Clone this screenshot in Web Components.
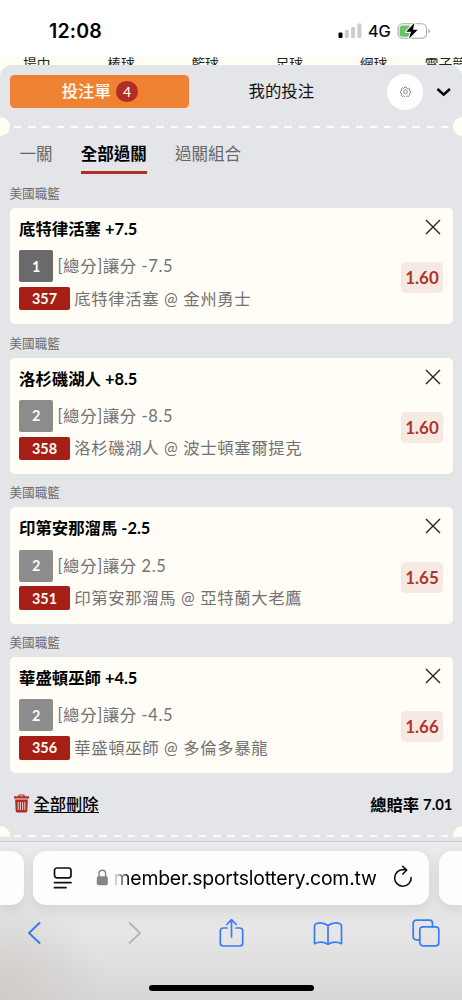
<!DOCTYPE html>
<html lang="zh-Hant">
<head>
<meta charset="utf-8">
<title>投注單</title>
<style>
html,body{margin:0;height:100%}
body{width:462px;height:1000px;overflow:hidden;background:#fff;font-family:Lato,"Noto Sans CJK TC",sans-serif;color:#111}
</style>
</head>
<body>
<phone-screen></phone-screen>
<script>
const define = (name, css, html) => customElements.define(name, class extends HTMLElement {
  connectedCallback() {
    if (this.shadowRoot) return;
    const root = this.attachShadow({mode: 'open'});
    root.innerHTML = `<style>*{box-sizing:border-box}${css}</style>` + (typeof html === 'function' ? html(this) : html);
  }
});

define('status-bar', `
:host{display:flex;box-sizing:border-box;height:56px;background:#fff;padding:5px 31px 0 49px;align-items:center;font-family:Inter,sans-serif;color:#000;flex:none}
.time{font-size:19.5px;font-weight:600;letter-spacing:.2px;width:288.500px;flex:none}
.net{font-size:16.4px;font-weight:400;-webkit-text-stroke:.2px #000;width:33px;margin-left:6.500px;letter-spacing:-.2px;flex:none}
svg{display:block;flex:none}`, `
<span class="time">12:08</span>
<svg width="24" height="16" viewBox="0 0 24 16"><rect x=".5" y="9.5" width="4" height="5.5" rx="1" fill="#000"/><g fill="#ccc"><rect x="6.8" y="7" width="4" height="8" rx="1"/><rect x="13.1" y="4" width="4" height="11" rx="1"/><rect x="19.4" y="0.5" width="4" height="14.5" rx="1"/></g></svg>
<span class="net">4G</span>
<svg width="34" height="18" viewBox="0 0 34 18" style="margin-left:-4px"><rect x="1" y="1.8" width="28.5" height="14.4" rx="4.6" fill="#fff" stroke="#aaa" stroke-width="1.1"/><path d="M31.3 6.8q1.6.7 1.6 2.3t-1.6 2.3z" fill="#aaa"/><path d="M5.5 3.4H13v11.4H5.5Q2.6 14.8 2.6 12V6.2Q2.6 3.4 5.5 3.4z" fill="#65c466"/><path d="M17.4 1 9.2 9.8H14l-2 7 8.7-9H16z" fill="#000" stroke="#fff" stroke-width="2.4" paint-order="stroke" stroke-linejoin="round"/></svg>`);

define('sport-strip', `
:host{display:block;height:9px;background:#fffdf4;overflow:hidden;flex:none}
div{display:flex;padding-left:23px;font-size:13.7px;line-height:20px;white-space:nowrap;color:#222;margin-top:-2px}
span{width:84.2px;flex:none}span:nth-child(5){width:65px}`, `
<div><span>場中</span><span>棒球</span><span>籃球</span><span>足球</span><span>網球</span><span>電子競技</span></div>`);

define('ticket-tear', `
:host{display:flex;height:19px;align-items:center;overflow:hidden;margin:0 -9.5px;flex:none}
i{width:19px;height:19px;border-radius:50%;background:#fffdf4;flex:none}
i:first-of-type{margin-left:-9.5px}i:last-of-type{margin-right:-9.5px}
b{flex:1;height:2px;margin:1.5px 4px 0 4.8px;background:repeating-linear-gradient(90deg,#fffdf4 0 7.4px,transparent 7.4px 14.23px)}`,
`<i></i><b></b><i></i>`);

define('slip-header', `
:host{display:flex;height:33px;align-items:center;flex:none;font-size:16.4px}
.on{width:179.5px;height:33px;border-radius:4.5px;background:#ef8132;color:#fffdf4;display:flex;align-items:center;justify-content:center;font-weight:500}
.on span{padding:0 0 3px 1px}
.n{width:21.5px;height:21.5px;border-radius:50%;background:#b22d23;margin-left:5.5px;font-size:14px;display:flex;align-items:center;justify-content:center}
.off{width:198px;padding:0 0 3px 59.5px}
.gear{width:36px;height:36px;border-radius:50%;background:#fff;display:flex;align-items:center;justify-content:center;flex:none}
.chev{margin-left:13px}`, `
<div class="on"><span>投注單</span><div class="n">4</div></div><div class="off">我的投注</div>
<div class="gear"><svg width="11" height="11" viewBox="0 0 22 22" fill="none" stroke="#666" stroke-width="1.5"><path d="M9.5 2h3l.7 2.2 2.1.9 2-1 2.1 2.1-1 2 .9 2.1 2.2.7v3l-2.2.7-.9 2.1 1 2-2.1 2.1-2-1-2.1.9-.7 2.2h-3l-.7-2.2-2.1-.9-2 1-2.1-2.1 1-2-.9-2.1L.5 13.5v-3l2.200-.7.9-2.100-1-2 2.100-2.100 2 1 2.100-.9z"/><circle cx="11" cy="11.5" r="3.8"/></svg></div>
<svg class="chev" width="16" height="10" viewBox="0 0 16 10" fill="none" stroke="#000" stroke-width="2.6"><path d="M1.500 2l6.200 5.600L13.900 2"/></svg>`);

define('mode-tabs', `
:host{display:flex;height:39px;padding:0 0 0 10px;font-size:16.5px;line-height:39px;color:#666;flex:none}
span{height:39px;flex:none;margin-right:28.3px}
.on{font-weight:700;color:#000;border-bottom:3.5px solid #b22d23}`,
`<span>一關</span><span class="on">全部過關</span><span>過關組合</span>`);

define('bet-card', `
:host{display:block;height:149.7px;flex:none}
.lg{font-size:12.6px;line-height:18px;color:#6c6c6e;height:23px}
.card{height:116.4px;background:#fffdf6;border-radius:5px;display:flex;justify-content:space-between;padding:10px 9.5px 0 9.5px}
.t{font-size:16.4px;font-weight:700;line-height:22px;height:32.3px;color:#000;white-space:nowrap}
.r{display:flex;align-items:center;color:#727272;font-size:16.4px;letter-spacing:.62px;white-space:nowrap}
.r span{padding-bottom:2px}
.r b{color:#fffdf6;font-size:14.4px;letter-spacing:0;display:flex;align-items:center;justify-content:center;border-radius:2px;margin-right:4.2px}
.a{height:32px;margin-bottom:4.6px}.a b{width:34.3px;height:32px;background:var(--pick,#8c8c8c)}
.c{height:23.6px}.c b{width:51px;height:23.6px;background:#a61f16}
.side{display:flex;flex-direction:column;align-items:flex-end}
svg{display:block;margin:1px 2px 0 0}
.odd{width:42px;height:31px;border-radius:4.5px;background:#f5e9e2;color:#b0342b;font-weight:700;font-size:16.9px;display:flex;align-items:center;justify-content:center;margin-top:27.2px}`,
e => `<div class="lg">美國職籃</div><div class="card"><div><div class="t"><slot></slot></div>
<div class="r a"><b>${e.getAttribute('pick')}</b><span>[總分]讓分 ${e.getAttribute('line')}</span></div>
<div class="r c"><b>${e.getAttribute('code')}</b><span>${e.getAttribute('match')}</span></div></div>
<div class="side"><svg width="16" height="16" viewBox="0 0 16 16" stroke="#222" stroke-width="1.35"><path d="M1 1l14 14M15 1L1 15"/></svg><div class="odd">${e.getAttribute('odd')}</div></div></div>`);

define('slip-total', `
:host{display:flex;justify-content:space-between;align-items:center;height:24px;font-size:16.3px;font-weight:700;color:#000;padding:0 0 0 4.5px;flex:none}
div{display:flex;align-items:center}
u{font-weight:500;text-decoration:none;border-bottom:1.3px solid #000;line-height:17px;height:17.500px;margin-left:4.5px}
small{font-size:14.9px;margin-left:4px}`, `
<div><svg width="15" height="19" viewBox="0 0 15 19"><path d="M0 2.200h4.300V1.500Q4.300.5 5.300.5h4.400q1 0 1 1v.7H15v2.200H0zM5.600 1.600v.7h3.800v-.7z" fill="#b22d23"/><path d="M1.100 5.500h12.800l-.6 11.600q0 1.400-1.300 1.400H3q-1.300 0-1.300-1.400z" fill="#b22d23"/><path d="M4.200 8v8M6.400 8v8M8.600 8v8M10.800 8v8" stroke="#e6cfcd" stroke-width="1"/></svg><u>全部刪除</u></div>
<div>總賠率<small>7.01</small></div>`);

define('bet-slip', `
:host{display:block;height:776px;background:#fffdf4;flex:none}
section{height:776px;background:#e4e5e8;border-radius:12px 12px 0 0;padding:10px 9.5px 0;display:flex;flex-direction:column;overflow:hidden}
ticket-tear.top{margin-top:9px}
mode-tabs{margin-top:-1px}
.list{margin-top:11px;flex:none}
slip-total{margin-top:8.200px}
ticket-tear.end{margin-top:10.300px;height:19px;clip-path:inset(0 0 8.500px 0)}`, `
<section><slip-header></slip-header><ticket-tear class="top"></ticket-tear><mode-tabs></mode-tabs>
<div class="list">
<bet-card style="--pick:#6a6a6a" pick="1" line="-7.5" code="357" match="底特律活塞 @ 金州勇士" odd="1.60">底特律活塞 +7.5</bet-card>
<bet-card pick="2" line="-8.5" code="358" match="洛杉磯湖人 @ 波士頓塞爾提克" odd="1.60">洛杉磯湖人 +8.5</bet-card>
<bet-card pick="2" line="2.5" code="351" match="印第安那溜馬 @ 亞特蘭大老鷹" odd="1.65">印第安那溜馬 -2.5</bet-card>
<bet-card pick="2" line="-4.5" code="356" match="華盛頓巫師 @ 多倫多暴龍" odd="1.66">華盛頓巫師 +4.5</bet-card>
</div>
<slip-total></slip-total><ticket-tear class="end"></ticket-tear></section>`);

define('browser-bar', `
:host{display:flex;flex-direction:column;height:159px;flex:none;border-top:1px solid #cbccd0;background:radial-gradient(circle at 0 100%,#d0cbc8 0,rgba(208,203,200,0) 110px),linear-gradient(#eaebec 0,#e4e4e4 45%,#e6e6e6 58%,#d7d7d7 100%);font-family:Inter,sans-serif}
.row{display:flex;gap:9.5px;margin-top:9px;height:53.5px}
.row>div{background:#fdfdfd;box-shadow:0 3px 12px rgba(0,0,0,.09)}
.l{width:23.5px;border-radius:0 13px 13px 0}.r{width:23.5px;border-radius:13px 0 0 13px}
.u{width:396px;border-radius:13px;display:flex;align-items:center;padding-left:20px}
svg{display:block;flex:none;fill:none}
.txt{width:264px;margin-left:4.5px;font-size:19.4px;letter-spacing:-.2px;white-space:nowrap;color:#000;-webkit-mask:linear-gradient(90deg,rgba(0,0,0,.1),#000 16px)}
.tools{display:flex;align-items:center;height:36px;padding-left:27px;margin-top:10.5px}
.tools svg{stroke:#3b7cf5;stroke-width:1.7;stroke-linecap:round;stroke-linejoin:round}
.home{width:165px;height:6px;border-radius:3px;background:#000;margin:33.500px auto 0 148.5px}`, `
<div class="row"><div class="l"></div><div class="u">
<svg width="20" height="22" viewBox="0 0 20 22" stroke="#111" stroke-width="1.7" stroke-linecap="round"><rect x="1.5" y="1" width="16.5" height="9.8" rx="2.5"/><path d="M1.5 15.7H18M1.5 20.7H13"/></svg>
<svg width="13" height="17" viewBox="0 0 13 17" style="margin-left:23px"><rect x=".8" y="7.3" width="11" height="9" rx="1.8" fill="#858587"/><path d="M3 8V4.700C3 .1 9.600.1 9.600 4.700V8" stroke="#858587" stroke-width="1.4"/></svg>
<span class="txt">member.sportslottery.com.tw</span>
<svg width="20" height="23" viewBox="0 0 20 23" style="margin-left:15px;margin-top:-2px" stroke="#111" stroke-width="1.6" stroke-linecap="round" stroke-linejoin="round"><path d="M18.200 12.500A8.300 8.300 0 1 1 9.900 4.600Q12 4.500 13.600 5M9.600 1.300L13.800 5 9.800 9"/></svg>
</div><div class="r"></div></div>
<div class="tools">
<svg width="14" height="22" viewBox="0 0 14 22" style="stroke-width:2"><path d="M12.500 1L2 11l10.500 10"/></svg>
<svg width="14" height="22" viewBox="0 0 14 22" style="stroke:#b4b4b4;stroke-width:1.8;margin-left:87px"><path d="M1.500 1L12 11 1.500 21"/></svg>
<svg width="25" height="30" viewBox="0 0 25 30" style="margin-left:76.500px"><path d="M8 10H4.300Q1.300 10 1.300 13V25Q1.300 28 4.300 28H20.700Q23.700 28 23.700 25V13Q23.700 10 20.700 10H17M12.500 19V2M7.800 6.500L12.500 1.700 17.200 6.500"/></svg>
<svg width="30" height="25" viewBox="0 0 30 25" style="margin-left:69.500px"><path d="M15 4.500Q9 .2 3 2.800 1.500 3.500 1.500 5V22.700Q8.500 19.500 15 23.200 21.500 19.500 28.500 22.700V5Q28.500 3.500 27 2.800 21 .2 15 4.500V23.200"/></svg>
<svg width="28" height="28" viewBox="0 0 28 28" style="margin-left:69px"><rect x="7.800" y="7.800" width="19" height="19" rx="3"/><path d="M7.800 20.800H4.500Q1.200 20.800 1.200 17.500V4.500Q1.200 1.200 4.500 1.200H17.500Q20.500 1.200 20.500 4.200V7.800"/></svg>
</div><div class="home"></div>`);

define('phone-screen', `:host{display:flex;flex-direction:column;width:462px;height:1000px;overflow:hidden}`,
`<status-bar></status-bar><sport-strip></sport-strip><bet-slip></bet-slip><browser-bar></browser-bar>`);
</script>
</body>
</html>
